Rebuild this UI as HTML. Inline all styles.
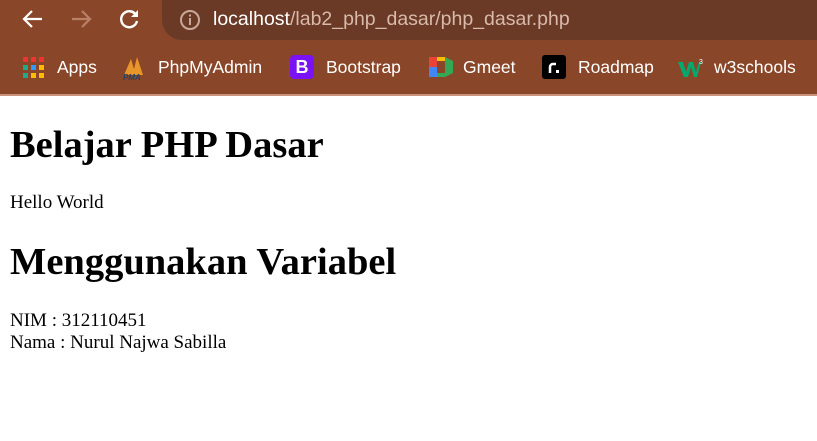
<!DOCTYPE html><html><head><style>
body{margin:0;width:817px;height:441px;overflow:hidden;background:#fff;font-family:"Liberation Serif",serif}
.top{position:absolute;left:0;top:0;width:817px;height:94px;background:#8a4629}
.omni{position:absolute;left:162px;top:0;width:700px;height:40px;background:#6a3a27;border-radius:0 0 0 20px}
.url{position:absolute;left:213px;top:8px;font:19.5px "Liberation Sans",sans-serif;color:#d9b9a9}
.url b{font-weight:normal;color:#fff}
.bm{position:absolute;top:57px;font:17.5px "Liberation Sans",sans-serif;color:#fff}
.line{position:absolute;left:0;top:94px;width:817px;height:2px;background:#c8937a}
.t{position:absolute;left:10px;margin:0;white-space:nowrap}
h1.t{font-size:38.5px;line-height:40px;font-weight:bold}
p.t{font-size:19px;line-height:22px}
</style></head><body>
<div class="top"></div>
<svg style="position:absolute;left:0;top:0" width="160" height="40">
<path d="M42 19H24M32 11l-8 8 8 8" stroke="#fff" stroke-width="2.2" fill="none"/>
<path d="M72 19h18M82 11l8 8-8 8" stroke="#b98068" stroke-width="2.2" fill="none"/>
<path d="M136 15a8 8 0 1 0 1 6" stroke="#fff" stroke-width="2.4" fill="none"/><path d="M138 10v7h-7z" fill="#fff"/>
</svg>
<div class="omni"></div>
<svg style="position:absolute;left:178px;top:8px" width="24" height="24"><circle cx="12" cy="12" r="9" stroke="#c9a799" stroke-width="2" fill="none"/><rect x="11" y="10" width="2" height="7" fill="#c9a799"/><rect x="11" y="6.5" width="2" height="2" fill="#c9a799"/></svg>
<div class="url"><b>localhost</b>/lab2_php_dasar/php_dasar.php</div>
<svg style="position:absolute;left:23px;top:57px" width="22" height="22">
<g fill="#e33"><rect x="0" y="0" width="5" height="5"/><rect x="8" y="0" width="5" height="5"/><rect x="16" y="0" width="5" height="5"/></g>
<rect x="0" y="8" width="5" height="5" fill="#2a8"/><rect x="8" y="8" width="5" height="5" fill="#39f"/><rect x="16" y="8" width="5" height="5" fill="#fb0"/>
<rect x="0" y="16" width="5" height="5" fill="#2a8"/><rect x="8" y="16" width="5" height="5" fill="#fb0"/><rect x="16" y="16" width="5" height="5" fill="#fb0"/>
</svg>
<div class="bm" style="left:57px">Apps</div>
<svg style="position:absolute;left:121px;top:55px" width="26" height="26"><path d="M3 20L10 4l3 10 3-12 6 18z" fill="#e8952a"/><text x="2" y="25" font-size="8" font-family="Liberation Sans" font-style="italic" font-weight="bold" fill="#246">PMA</text></svg>
<div class="bm" style="left:158px">PhpMyAdmin</div>
<div style="position:absolute;left:290px;top:55px;width:24px;height:24px;background:#7b12f5;border-radius:4px;color:#fff;font:bold 18px 'Liberation Sans';text-align:center;line-height:24px">B</div>
<div class="bm" style="left:326px">Bootstrap</div>
<svg style="position:absolute;left:429px;top:57px" width="24" height="20"><rect x="0" y="0" width="8" height="10" fill="#ea4335"/><rect x="0" y="10" width="8" height="10" fill="#4285f4"/><rect x="8" y="0" width="8" height="4" fill="#fbbc04"/><rect x="8" y="16" width="8" height="4" fill="#34a853"/><path d="M16 0v20l8-4V4z" fill="#34a853"/></svg>
<div class="bm" style="left:463px">Gmeet</div>
<div style="position:absolute;left:542px;top:55px;width:24px;height:24px;background:#000;border-radius:3px"></div>
<svg style="position:absolute;left:542px;top:55px" width="24" height="24"><path d="M8 18v-6a3 3 0 0 1 3-3h3" stroke="#fff" stroke-width="2.5" fill="none"/><rect x="14" y="15" width="3" height="3" fill="#fff"/></svg>
<div class="bm" style="left:578px">Roadmap</div>
<svg style="position:absolute;left:678px;top:57px" width="26" height="22"><path d="M0 5h5l3 10 3-10h4l3 10 3-10h2l-4 15h-3l-3-10-3 10H6z" fill="#04aa6d"/><text x="21" y="7" font-size="7" fill="#fff" font-family="Liberation Sans">3</text></svg>
<div class="bm" style="left:714px">w3schools</div>
<div class="line"></div>
<h1 class="t" style="top:125px">Belajar PHP Dasar</h1>
<p class="t" style="top:192px">Hello World</p>
<h1 class="t" style="top:242px">Menggunakan Variabel</h1>
<p class="t" style="top:310px">NIM : 312110451<br>Nama : Nurul Najwa Sabilla</p>
</body></html>
